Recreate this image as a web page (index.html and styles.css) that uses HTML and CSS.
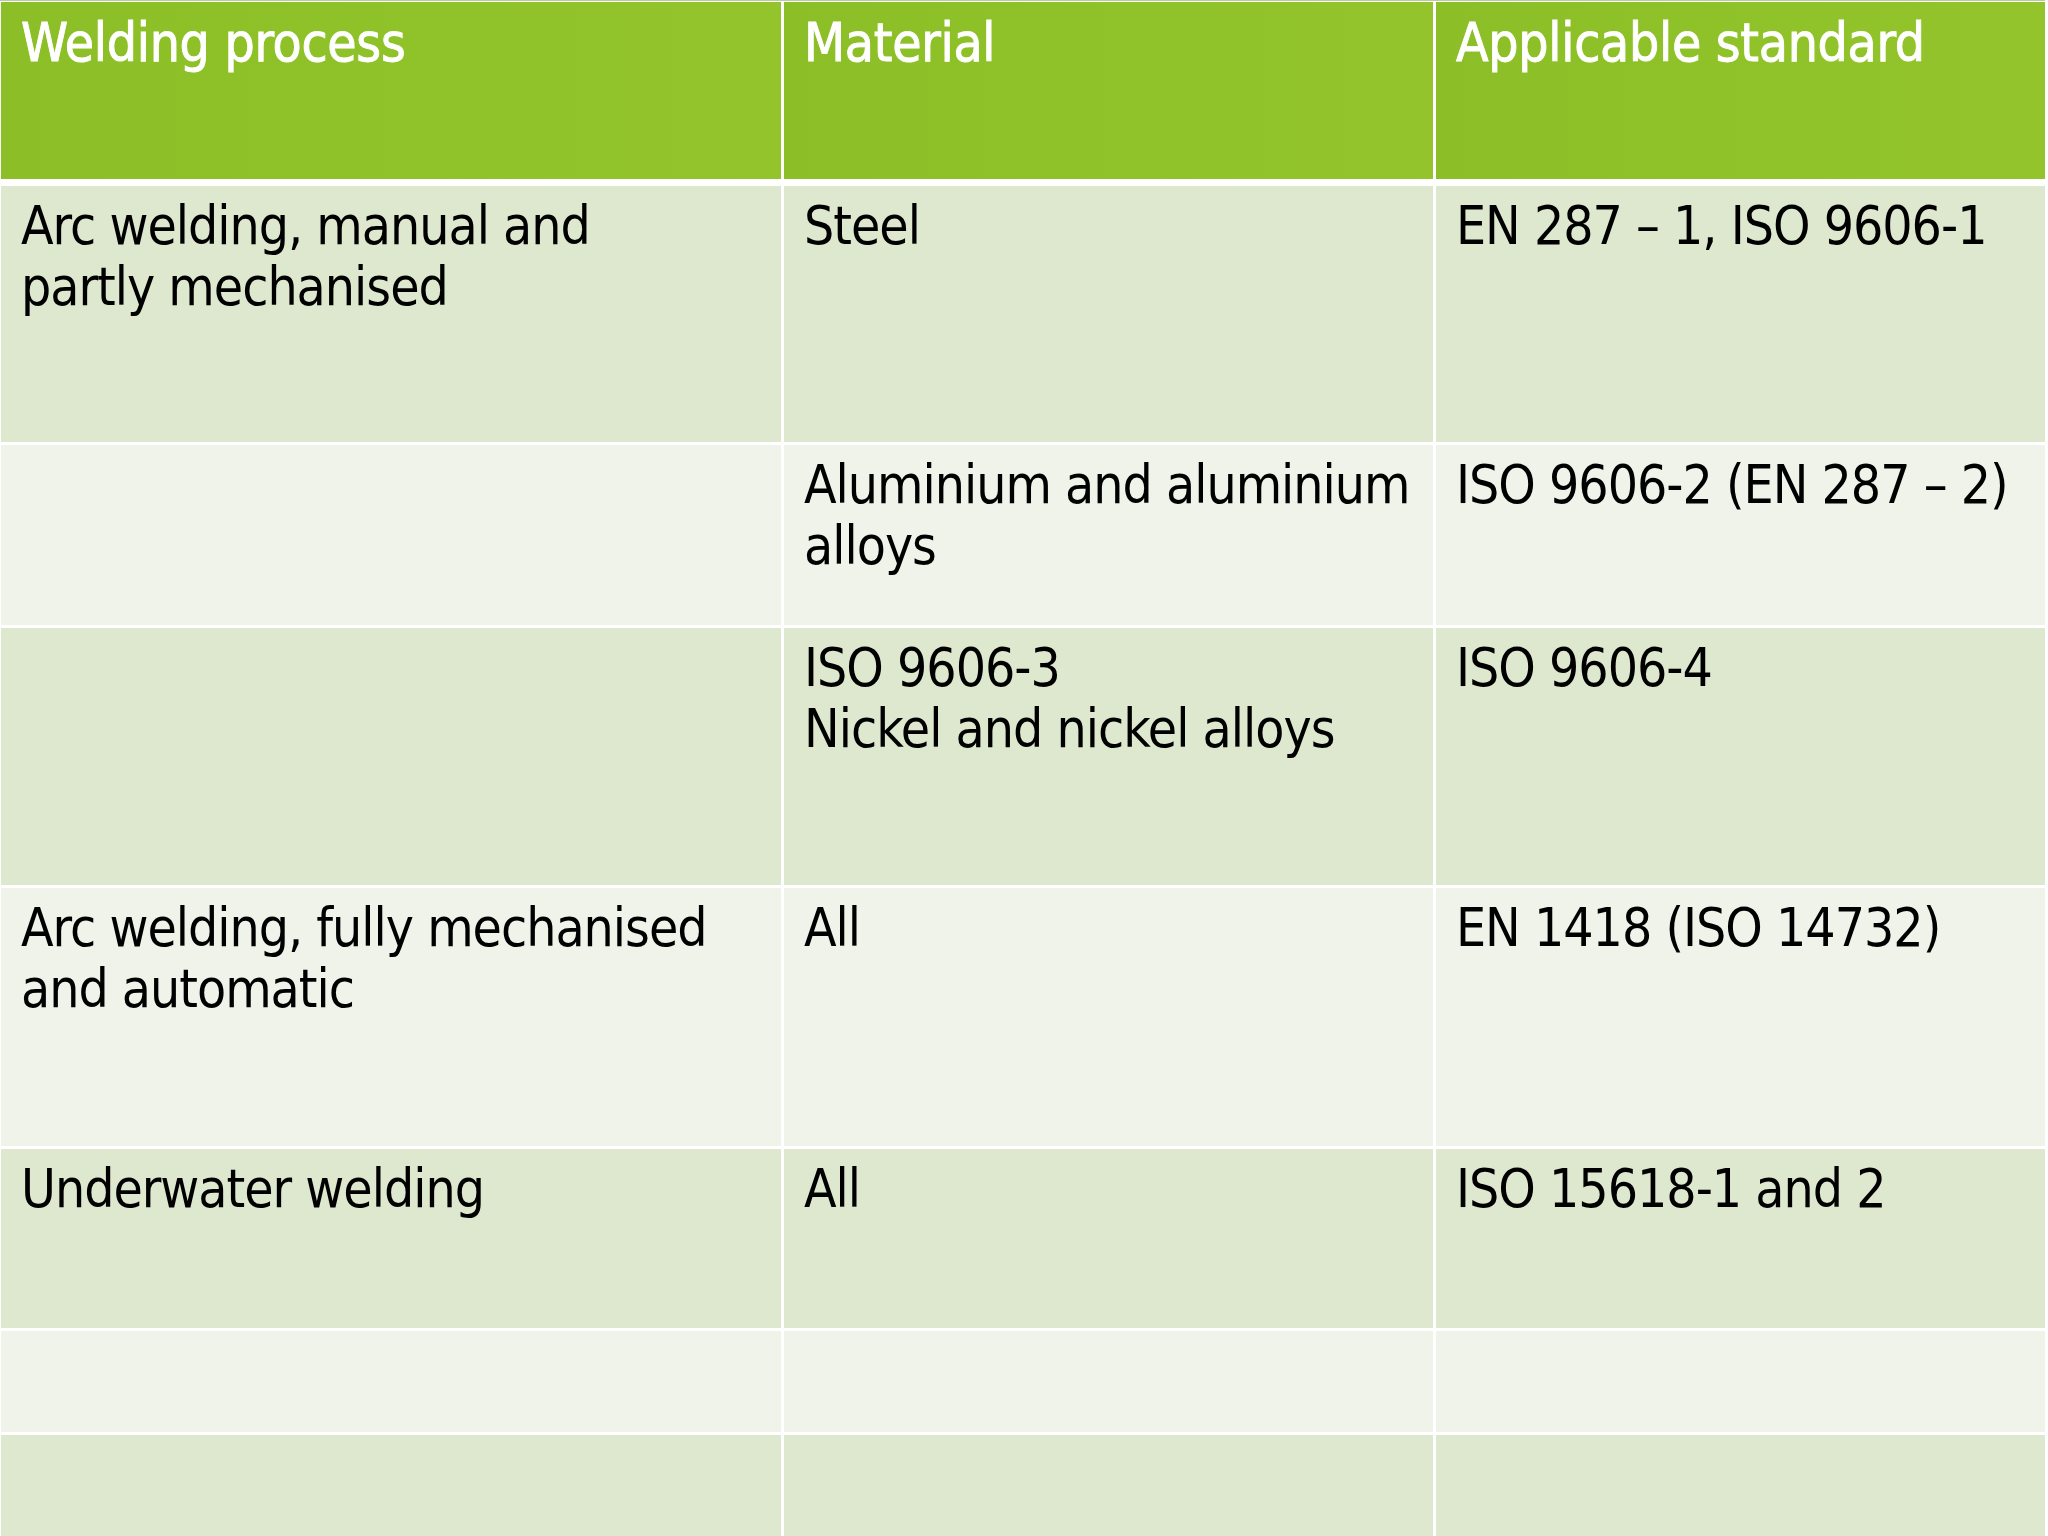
FILE: index.html
```html
<!DOCTYPE html>
<html lang="en">
<head>
<meta charset="utf-8">
<title>Welding standards</title>
<link rel="stylesheet" href="styles.css">
</head>
<body>
<div class="table">
  <div class="head">
    <div class="cell">Welding process</div>
    <div class="cell">Material</div>
    <div class="cell">Applicable standard</div>
  </div>
  <div class="body">
    <div class="cell dark">Arc welding, manual and<br>partly mechanised</div>
    <div class="cell dark">Steel</div>
    <div class="cell dark">EN 287 – 1, ISO 9606-1</div>

    <div class="cell light"></div>
    <div class="cell light">Aluminium and aluminium<br>alloys</div>
    <div class="cell light">ISO 9606-2 (EN 287 – 2)</div>

    <div class="cell dark"></div>
    <div class="cell dark">ISO 9606-3<br>Nickel and nickel alloys</div>
    <div class="cell dark">ISO 9606-4</div>

    <div class="cell light">Arc welding, fully mechanised<br>and automatic</div>
    <div class="cell light">All</div>
    <div class="cell light">EN 1418 (ISO 14732)</div>

    <div class="cell dark">Underwater welding</div>
    <div class="cell dark">All</div>
    <div class="cell dark">ISO 15618-1 and 2</div>

    <div class="cell light"></div>
    <div class="cell light"></div>
    <div class="cell light"></div>

    <div class="cell dark"></div>
    <div class="cell dark"></div>
    <div class="cell dark"></div>
  </div>
</div>
</body>
</html>
```

FILE: styles.css
```css
html, body {
  margin: 0;
  padding: 0;
  background: #ffffff;
}

body {
  width: 2048px;
  height: 1536px;
  overflow: hidden;
  font-family: "DejaVu Sans Condensed", "Liberation Sans", sans-serif;
  font-size: 53px;
  line-height: 61px;
  color: #000000;
}

.table {
  width: 2045px;
  padding-top: 1px;
  padding-left: 1px;
  background: #ffffff;
  box-sizing: border-box;
  border-top: 1px solid #b9cc9c;
}

.head,
.body {
  display: grid;
  grid-template-columns: 780px 649px 1fr;
  column-gap: 3px;
}

.head {
  height: 177px;
  margin-bottom: 7px;
}

.body {
  row-gap: 3px;
  grid-template-rows: 256px 180px 257px 258px 179px 101px 102px;
}

.cell {
  padding: 9px 16px 0 20px;
  box-sizing: border-box;
  white-space: nowrap;
  letter-spacing: -1px;
  overflow: hidden;
}

.head .cell {
  padding-top: 10px;
  background: linear-gradient(90deg, #8cbf27 0%, #93c42b 100%);
  color: #ffffff;
  letter-spacing: -0.3px;
  -webkit-text-stroke: 0.9px #ffffff;
}

.dark {
  background: #dde8cf;
}

.light {
  background: #eff3ea;
}
```
